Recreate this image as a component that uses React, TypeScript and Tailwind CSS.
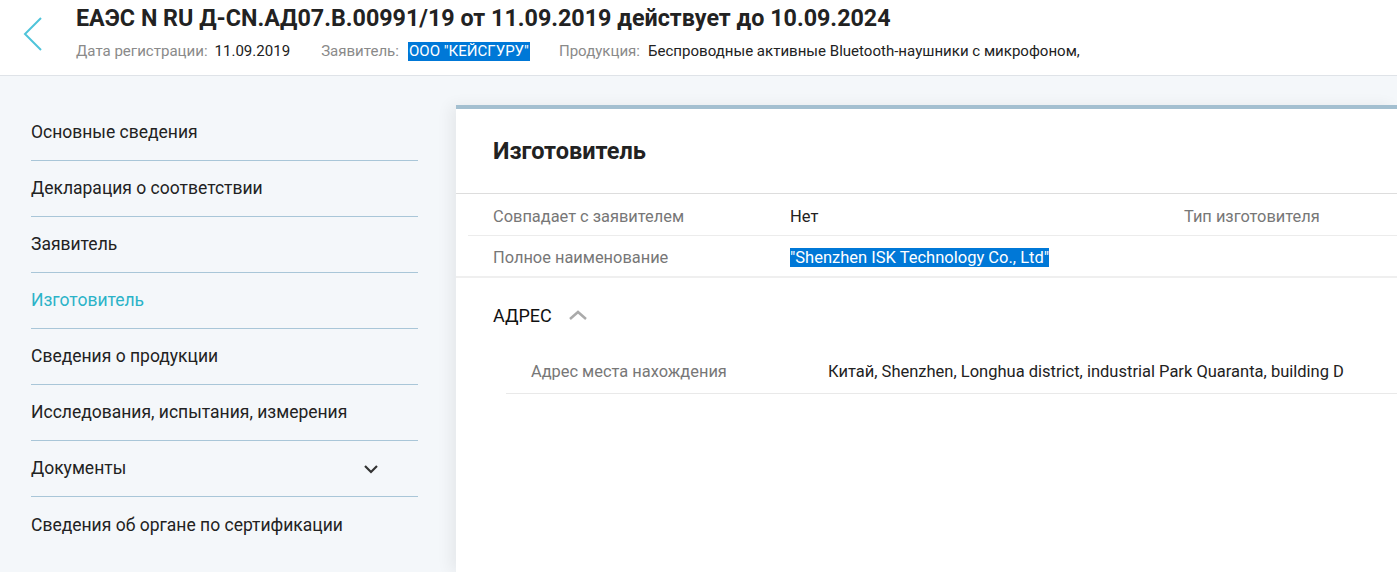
import React from "react";

const nav = [
  "Основные сведения",
  "Декларация о соответствии",
  "Заявитель",
  "Изготовитель",
  "Сведения о продукции",
  "Исследования, испытания, измерения",
  "Документы",
  "Сведения об органе по сертификации",
];

export default function App() {
  return (
    <div className="w-[1397px] h-[572px] overflow-hidden bg-[#f4f7fa] text-[#222] flex flex-col" style={{ fontFamily: "Roboto, 'Noto Sans', sans-serif" }}>
      <header className="h-[76px] shrink-0 bg-white border-b border-[#dfe3e8] flex items-start">
        <div className="w-[76px] flex justify-center pt-[16px]">
          <svg width="22" height="36" viewBox="0 0 22 36" className="mr-[10px]">
            <path d="M19 2 L3 18 L19 34" fill="none" stroke="#4fc4da" strokeWidth="2" />
          </svg>
        </div>
        <div className="pt-[4px]">
          <h1 className="text-[23.3px] font-bold leading-[28px] text-[#222]">ЕАЭС N RU Д-CN.АД07.В.00991/19 от 11.09.2019 действует до 10.09.2024</h1>
          <div className="mt-[10px] flex items-center text-[15.05px] leading-[19px]">
            <span className="text-[#8a8a8a]">Дата регистрации:</span>
            <span className="ml-[7px]">11.09.2019</span>
            <span className="ml-[31px] text-[#8a8a8a]">Заявитель:</span>
            <span className="ml-[9px] bg-[#0078d7] text-white px-[1px]">ООО "КЕЙСГУРУ"</span>
            <span className="ml-[29px] text-[#8a8a8a]">Продукция:</span>
            <span className="ml-[8px]">Беспроводные активные Bluetooth-наушники с микрофоном,</span>
          </div>
        </div>
      </header>
      <div className="flex flex-1 min-h-0">
        <aside className="w-[456px] shrink-0 pt-[29px] pl-[31px] pr-[38px]">
          {nav.map((item, i) => (
            <div
              key={item}
              className={`h-[56px] flex items-center justify-between text-[17.5px] ${i < nav.length - 1 ? "border-b border-[#a9c6d8]" : ""} ${item === "Изготовитель" ? "text-[#2bb3c8]" : "text-[#222]"}`}
            >
              <span>{item}</span>
              {item === "Документы" && (
                <svg width="16" height="10" viewBox="0 0 16 10" className="mr-[39px]">
                  <path d="M2 2 L8 8 L14 2" fill="none" stroke="#333" strokeWidth="2.2" />
                </svg>
              )}
            </div>
          ))}
        </aside>
        <main className="flex-1 mt-[29px] bg-white border-t-4 border-[#a3bfd0] shadow-[-6px_0_14px_rgba(0,0,0,0.06)]">
          <div className="h-[85px] border-b border-[#dddddd] flex items-center pl-[37px] pt-[1px]">
            <h2 className="text-[23.5px] font-bold text-[#222]">Изготовитель</h2>
          </div>
          <div className="pl-[12px]">
            <div className="h-[42px] border-b border-[#ececec] grid grid-cols-[297px_394px_1fr] items-center pl-[25px] pt-[5px] text-[16.4px]">
              <span className="text-[#777]">Совпадает с заявителем</span>
              <span className="text-[#222] text-[16.5px]">Нет</span>
              <span className="text-[#777]">Тип изготовителя</span>
            </div>
          </div>
          <div className="h-[42px] border-b-2 border-[#efefef] grid grid-cols-[297px_1fr] items-center pl-[37px] pt-[5px] text-[16.4px]">
            <span className="text-[#777]">Полное наименование</span>
            <span><span className="bg-[#0078d7] text-white text-[16.5px]">"Shenzhen ISK Technology Co., Ltd"</span></span>
          </div>
          <div className="h-[74px] flex items-center pl-[37px]">
            <span className="text-[18px] text-[#111]">АДРЕС</span>
            <svg width="20" height="12" viewBox="0 0 20 12" className="ml-[16px]">
              <path d="M2 10 L10 3 L18 10" fill="none" stroke="#aaaaaa" strokeWidth="2.5" />
            </svg>
          </div>
          <div className="pl-[50px]">
            <div className="h-[42px] border-b border-[#e9e9e9] grid grid-cols-[297px_1fr] items-center pl-[25px] text-[16.4px]">
              <span className="text-[#777]">Адрес места нахождения</span>
              <span className="text-[#222] text-[16.5px]">Китай, Shenzhen, Longhua district, industrial Park Quaranta, building D</span>
            </div>
          </div>
        </main>
      </div>
    </div>
  );
}
